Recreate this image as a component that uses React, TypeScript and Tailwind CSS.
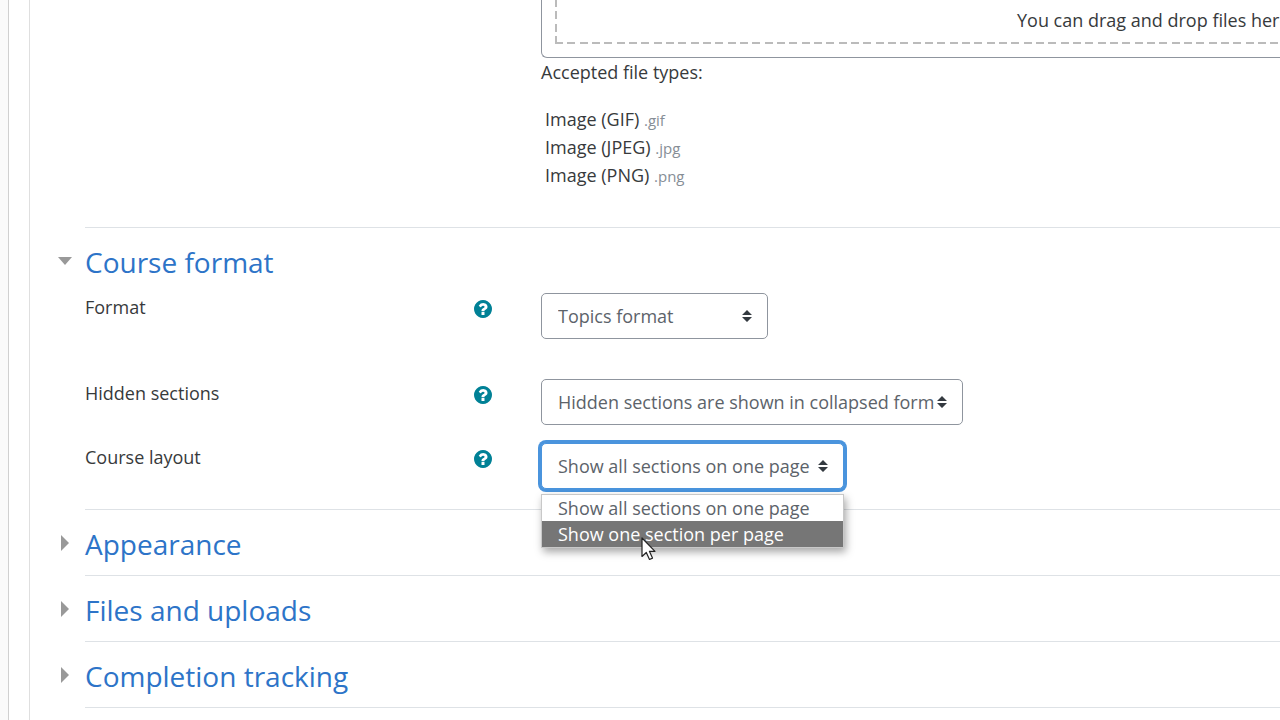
import { useState } from "react";
import type { ReactNode } from "react";

const fileTypes = [
  { name: "Image (GIF)", ext: ".gif" },
  { name: "Image (JPEG)", ext: ".jpg" },
  { name: "Image (PNG)", ext: ".png" },
];

const layouts = ["Show all sections on one page", "Show one section per page"];

function HelpIcon() {
  return (
    <button type="button" aria-label="Help" className="mt-[7px] block h-[18px] w-[18px]">
      <svg viewBox="0 0 1536 1536" className="block h-[18px] w-[18px]" fill="#008196" aria-hidden="true">
        <path d="M896 1248v-192q0-14-9-23t-23-9H672q-14 0-23 9t-9 23v192q0 14 9 23t23 9h192q14 0 23-9t9-23zm256-672q0-88-55.500-163T958 297t-170-41q-243 0-371 213-15 24 8 42l132 100q7 6 19 6 16 0 25-12 53-68 86-92 34-24 86-24 48 0 85.500 26t37.500 59q0 38-20 61t-68 45q-63 28-115.500 86.500T640 892v36q0 14 9 23t23 9h192q14 0 23-9t9-23q0-19 21.500-49.500T972 829q32-18 49-28.500t46-35 44.500-48 28-60.500 12.500-81zm384 192q0 209-103 385.500T1153.500 1433 768 1536t-385.500-103T103 1153.500 0 768t103-385.500T382.500 103 768 0t385.500 103T1433 382.500 1536 768z" />
      </svg>
    </button>
  );
}

function SelectBox({
  id,
  options,
  width,
  focused = false,
  children,
}: {
  id: string;
  options: string[];
  width: string;
  focused?: boolean;
  children?: ReactNode;
}) {
  return (
    <div className={`relative ${width}`}>
      <select
        id={id}
        className={`block h-[46px] w-full appearance-none rounded-[5px] border bg-white pl-4 text-[18px] leading-7 text-[#5c636a] outline-none ${
          focused ? "border-[#4a94dd] ring-3 ring-[#4a94dd]" : "border-[#8f959e]"
        }`}
      >
        {options.map((o) => (
          <option key={o}>{o}</option>
        ))}
      </select>
      <svg
        viewBox="0 0 10 14"
        className="pointer-events-none absolute top-4 right-4 h-[14px] w-[10px]"
        fill="#343a40"
        aria-hidden="true"
      >
        <path d="M5 1 10 6H0ZM0 8h10L5 13Z" />
      </svg>
      {children}
    </div>
  );
}

function Row({ id, label, gap, children }: { id: string; label: string; gap: string; children: ReactNode }) {
  return (
    <div className={`flex items-start ${gap}`}>
      <label htmlFor={id} className="w-[389px] shrink-0 leading-7">
        {label}
      </label>
      <div className="w-[67px] shrink-0">
        <HelpIcon />
      </div>
      {children}
    </div>
  );
}

function Section({ title, open = false, children }: { title: string; open?: boolean; children?: ReactNode }) {
  return (
    <section className="flex">
      <div className="w-7 shrink-0 pt-[26px]">
        <svg viewBox="0 0 16 16" className="h-4 w-4" fill="#999999" aria-hidden="true">
          <path d={open ? "M1 4h14L8 12Z" : "M4 0v16l8-8Z"} />
        </svg>
      </div>
      <div className="min-w-0 grow border-t border-[#dee2e6]">
        <h3 className="flex h-[65px] items-center pt-[2px]">
          <a href="#" className="text-[28px] leading-9 text-[#2d74c8]">
            {title}
          </a>
        </h3>
        {children}
      </div>
    </section>
  );
}

export default function App() {
  const [active, setActive] = useState(1);
  return (
    <div className="flex h-screen overflow-hidden bg-[#fafafa] pl-2 font-['Open_Sans','Noto_Sans',sans-serif] text-[18px] text-[#373a3c]">
      <main className="min-w-0 grow border-l border-[#d0d0d0] bg-white pl-5">
        <form className="min-h-screen border-l border-[#dfdfdf] pl-[27px]">
          <div className="pb-[38px] pl-[484px]">
            <div className="rounded-bl-[6px] border-b border-l border-[#8f959e] pb-[13px] pl-[13px]">
              <div className="flex">
                <div className="w-[2px] shrink-0 bg-[repeating-linear-gradient(to_top,#bbb_0px,#bbb_8px,transparent_8px,transparent_12px,#bbb_12px,#bbb_20px,transparent_20px,transparent_25px,#bbb_25px,#bbb_33px,transparent_33px,transparent_37px)]" />
                <div className="min-w-0 grow">
                  <p className="h-[42px] overflow-hidden pt-[6px] pl-[460px] leading-7 whitespace-nowrap">
                    You can drag and drop files here
                  </p>
                  <div className="h-[2px] bg-[repeating-linear-gradient(to_right,#bbb_0px,#bbb_6px,transparent_6px,transparent_10px,#bbb_10px,#bbb_18px,transparent_18px,transparent_23px,#bbb_23px,#bbb_31px,transparent_31px,transparent_35px,#bbb_35px,#bbb_37px)]" />
                </div>
              </div>
            </div>
            <p className="leading-7">Accepted file types:</p>
            <ul className="mt-[19px] pl-1">
              {fileTypes.map((t) => (
                <li key={t.ext} className="h-7 leading-7">
                  {t.name} <small className="text-[15px] text-[#868e96]">{t.ext}</small>
                </li>
              ))}
            </ul>
          </div>

          <Section title="Course format" open>
            <Row id="format" label="Format" gap="mb-10">
              <SelectBox id="format" options={["Topics format"]} width="w-[227px]" />
            </Row>
            <Row id="hidden" label="Hidden sections" gap="mb-[18px]">
              <SelectBox
                id="hidden"
                options={["Hidden sections are shown in collapsed form"]}
                width="w-[422px]"
              />
            </Row>
            <Row id="layout" label="Course layout" gap="mb-5">
              <SelectBox id="layout" options={layouts} width="w-[303px]" focused>
                <ul
                  role="listbox"
                  aria-label="Course layout"
                  className="absolute inset-x-0 top-[51px] z-10 border border-[#c8c8c8] bg-white shadow-[2px_4px_8px_rgba(0,0,0,0.35)]"
                >
                  {layouts.map((o, i) => (
                    <li
                      key={o}
                      role="option"
                      aria-selected={i === active}
                      onMouseEnter={() => setActive(i)}
                      className={`h-[26px] pl-4 leading-[26px] whitespace-nowrap ${
                        i === active ? "bg-[#767676] text-white" : "text-[#5c636a]"
                      }`}
                    >
                      {o}
                    </li>
                  ))}
                </ul>
                <svg
                  viewBox="0 0 15 24"
                  className="pointer-events-none absolute top-[94px] left-[100px] z-20 h-6 w-[15px]"
                  aria-hidden="true"
                >
                  <path
                    d="M1 1v18.500l4.300-4 3.200 7 3-1.400-3.100-6.800H14Z"
                    fill="#fff"
                    stroke="#222"
                    strokeWidth="1.200"
                    strokeLinejoin="round"
                  />
                </svg>
              </SelectBox>
            </Row>
          </Section>
          <Section title="Appearance" />
          <Section title="Files and uploads" />
          <Section title="Completion tracking" />
          <hr className="ml-7 border-[#dee2e6]" />
        </form>
      </main>
    </div>
  );
}
